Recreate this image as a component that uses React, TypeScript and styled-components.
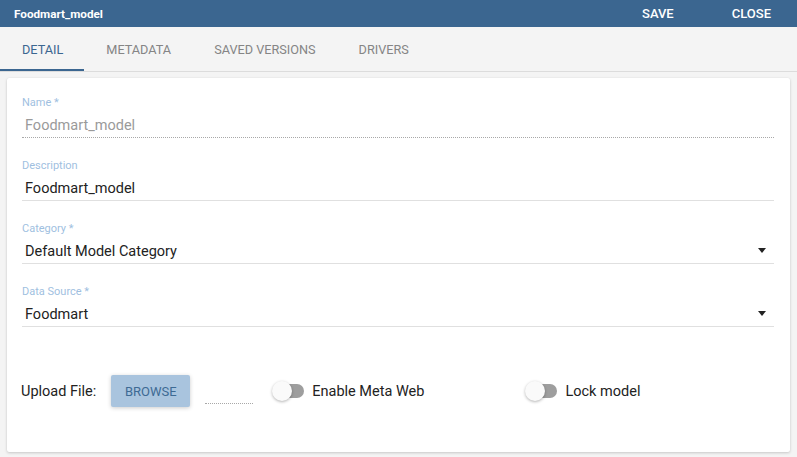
import React from "react";
import styled, { createGlobalStyle } from "styled-components";

const Global = createGlobalStyle`
  html, body { margin: 0; padding: 0; }
  body {
    background: #f4f4f4;
    font-family: Roboto, "Liberation Sans", Arial, sans-serif;
    width: 797px;
    height: 457px;
    overflow: hidden;
  }
`;

const Page = styled.div`
  display: flex;
  flex-direction: column;
  height: 457px;
`;

const TopBar = styled.header`
  height: 27px;
  background: #3b6690;
  display: flex;
  align-items: center;
  padding: 0 14px;
  color: #fff;
`;

const Title = styled.div`
  font-size: 11.7px;
  font-weight: 700;
  flex: 1;
`;

const BarButton = styled.button<{ $gap: number; $end?: number }>`
  background: none;
  border: none;
  color: #fff;
  font-family: inherit;
  font-size: 13px;
  font-weight: 500;
  padding: 0;
  margin-left: ${(p) => p.$gap}px;
  margin-right: ${(p) => p.$end ?? 0}px;
  cursor: pointer;
`;

const Tabs = styled.nav`
  height: 44px;
  display: flex;
  border-bottom: 1px solid #dcdcdc;
  background: #f4f4f4;
`;

const Tab = styled.div<{ $active?: boolean }>`
  padding: 3px 21px 0 22px;
  display: flex;
  align-items: center;
  font-size: 12.7px;
  color: ${(p) => (p.$active ? "#3b6690" : "#858585")};
  border-bottom: 2px solid ${(p) => (p.$active ? "#3b6690" : "transparent")};
  box-sizing: border-box;
  height: 44px;
`;

const Card = styled.section`
  margin: 6px 7px 0 7px;
  background: #fff;
  border-radius: 2px;
  box-shadow: 0 1px 3px rgba(0, 0, 0, 0.18), 0 0 1px rgba(0, 0, 0, 0.08);
  padding: 18px 16px 45px 15px;
`;

const Field = styled.div<{ $first?: boolean }>`
  margin-top: ${(p) => (p.$first ? 0 : 21)}px;
`;

const Label = styled.div`
  font-size: 11px;
  line-height: 14px;
  margin-bottom: 1px;
  color: #9fbfdf;
`;

const Value = styled.div<{ $disabled?: boolean; $dotted?: boolean }>`
  height: 22px;
  padding-top: 4px;
  line-height: 22px;
  font-size: 14.5px;
  padding-left: 3px;
  color: ${(p) => (p.$disabled ? "#9a9a9a" : "#222")};
  border-bottom: 1px ${(p) => (p.$dotted ? "dotted #a8a8a8" : "solid #e0e0e0")};
  position: relative;
`;

const Arrow = styled.span`
  position: absolute;
  right: 8px;
  top: 11px;
  width: 0;
  height: 0;
  border-left: 4.5px solid transparent;
  border-right: 4.5px solid transparent;
  border-top: 5px solid #222;
`;

const BottomRow = styled.div`
  margin-top: 48px;
  display: flex;
  align-items: center;
  height: 32px;
`;

const UploadLabel = styled.span`
  font-size: 14.5px;
  color: #222;
  margin-left: -1px;
  margin-right: 15px;
`;

const Browse = styled.button`
  width: 79px;
  height: 32px;
  border: none;
  border-radius: 2px;
  background: #a9c4de;
  color: #3d6a94;
  font-family: inherit;
  font-size: 13px;
  font-weight: 400;
  box-shadow: 0 1px 4px rgba(0, 0, 0, 0.2);
  cursor: pointer;
`;

const FileLine = styled.div`
  width: 48px;
  margin-left: 15px;
  height: 13px;
  align-self: flex-end;
  border-bottom: 1px dotted #a8a8a8;
  margin-bottom: 3px;
`;

const Toggle = styled.label<{ $ml: number }>`
  display: flex;
  align-items: center;
  margin-left: ${(p) => p.$ml}px;
  font-size: 14.5px;
  color: #222;
`;

const Switch = styled.span`
  position: relative;
  width: 32px;
  height: 20px;
  margin-right: 8px;
  display: inline-block;
`;

const Track = styled.span`
  position: absolute;
  left: 4px;
  right: 0;
  top: 3px;
  height: 14px;
  border-radius: 7px;
  background: #9e9e9e;
`;

const Thumb = styled.span`
  position: absolute;
  left: 0;
  top: 0;
  width: 20px;
  height: 20px;
  border-radius: 50%;
  background: #fafafa;
  box-shadow: 0 1px 3px rgba(0, 0, 0, 0.3);
`;

const Toggler = ({ label, ml }: { label: string; ml: number }) => (
  <Toggle $ml={ml}>
    <Switch>
      <Track />
      <Thumb />
    </Switch>
    {label}
  </Toggle>
);

export default function App() {
  return (
    <>
      <Global />
      <Page>
        <TopBar>
          <Title>Foodmart_model</Title>
          <BarButton $gap={0}>SAVE</BarButton>
          <BarButton $gap={58} $end={12}>CLOSE</BarButton>
        </TopBar>
        <Tabs>
          <Tab $active>DETAIL</Tab>
          <Tab>METADATA</Tab>
          <Tab>SAVED VERSIONS</Tab>
          <Tab>DRIVERS</Tab>
        </Tabs>
        <Card>
          <Field $first>
            <Label>Name *</Label>
            <Value $disabled $dotted>Foodmart_model</Value>
          </Field>
          <Field>
            <Label>Description</Label>
            <Value>Foodmart_model</Value>
          </Field>
          <Field>
            <Label>Category *</Label>
            <Value>
              Default Model Category
              <Arrow />
            </Value>
          </Field>
          <Field>
            <Label>Data Source *</Label>
            <Value>
              Foodmart
              <Arrow />
            </Value>
          </Field>
          <BottomRow>
            <UploadLabel>Upload File:</UploadLabel>
            <Browse>BROWSE</Browse>
            <FileLine />
            <Toggler label="Enable Meta Web" ml={19} />
            <Toggler label="Lock model" ml={101} />
          </BottomRow>
        </Card>
      </Page>
    </>
  );
}
